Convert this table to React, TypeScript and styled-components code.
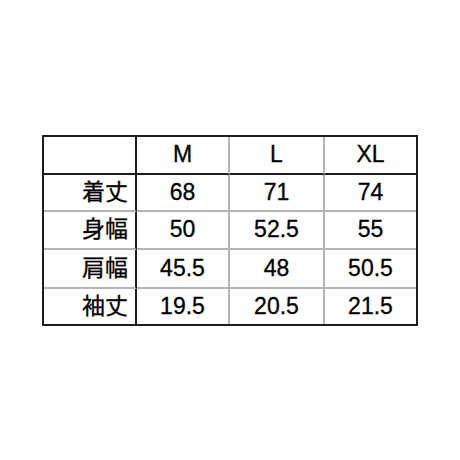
import styled, { createGlobalStyle } from 'styled-components';

const GlobalStyle = createGlobalStyle`
  html, body {
    margin: 0;
    padding: 0;
    background: #ffffff;
  }
`;

const Page = styled.main`
  width: 460px;
  height: 460px;
  display: flex;
  align-items: center;
  justify-content: center;
  font-family: 'Liberation Sans', 'Noto Sans CJK JP', sans-serif;
  color: #000000;
`;

// track sizes include each cell's own right / bottom border
const SizeTable = styled.div`
  display: grid;
  grid-template-columns: 93px 93px 95px 91px;
  grid-template-rows: 38px 37px 38px 39px 35px;
  border: 2px solid #1e1e1e;
`;

const Cell = styled.div<{ $head?: boolean; $label?: boolean; $lastCol?: boolean; $lastRow?: boolean }>`
  display: flex;
  align-items: center;
  justify-content: ${(p) => (p.$label ? 'flex-end' : 'center')};
  padding-right: ${(p) => (p.$label ? '7px' : '0')};
  font-size: 23px;
  line-height: 1;
  -webkit-text-stroke: 0.3px #000;
  border-right: ${(p) =>
    p.$lastCol ? 'none' : p.$label ? '2px solid #1e1e1e' : '2px solid #b4b4b4'};
  border-bottom: ${(p) =>
    p.$lastRow ? 'none' : p.$head ? '2px solid #1e1e1e' : '2px solid #b4b4b4'};
`;

const sizes = ['M', 'L', 'XL'];

const rows = [
  { label: '着丈', values: ['68', '71', '74'] },
  { label: '身幅', values: ['50', '52.5', '55'] },
  { label: '肩幅', values: ['45.5', '48', '50.5'] },
  { label: '袖丈', values: ['19.5', '20.5', '21.5'] },
];

function App() {
  return (
    <>
      <GlobalStyle />
      <Page>
        <SizeTable>
          <Cell $head $label />
          {sizes.map((s, i) => (
            <Cell key={s} $head $lastCol={i === sizes.length - 1}>
              {s}
            </Cell>
          ))}
          {rows.map((row, r) => {
            const lastRow = r === rows.length - 1;
            return [
              <Cell key={row.label} $label $lastRow={lastRow}>
                {row.label}
              </Cell>,
              ...row.values.map((v, i) => (
                <Cell
                  key={row.label + i}
                  $lastRow={lastRow}
                  $lastCol={i === row.values.length - 1}
                >
                  {v}
                </Cell>
              )),
            ];
          })}
        </SizeTable>
      </Page>
    </>
  );
}

export default App;
